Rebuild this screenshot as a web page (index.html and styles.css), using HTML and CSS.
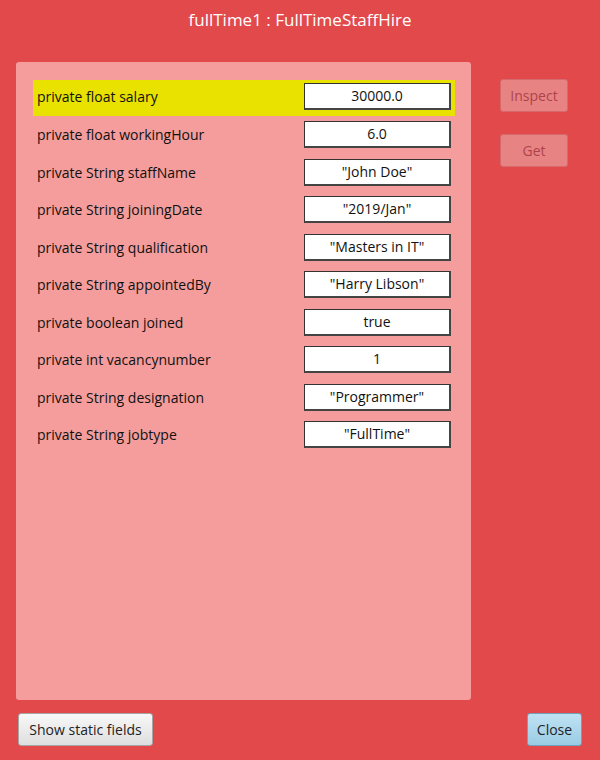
FILE: index.html
```html
<!DOCTYPE html>
<html>
<head>
<meta charset="utf-8">
<link rel="stylesheet" href="styles.css">
</head>
<body>
<div class="title">fullTime1 : FullTimeStaffHire</div>
<div class="main">
  <div class="panel">
    <div class="row sel"><span class="lbl">private float salary</span><span class="val">30000.0</span></div>
    <div class="row"><span class="lbl">private float workingHour</span><span class="val">6.0</span></div>
    <div class="row"><span class="lbl">private String staffName</span><span class="val">"John Doe"</span></div>
    <div class="row"><span class="lbl">private String joiningDate</span><span class="val">"2019/Jan"</span></div>
    <div class="row"><span class="lbl">private String qualification</span><span class="val">"Masters in IT"</span></div>
    <div class="row"><span class="lbl">private String appointedBy</span><span class="val">"Harry Libson"</span></div>
    <div class="row"><span class="lbl">private boolean joined</span><span class="val">true</span></div>
    <div class="row"><span class="lbl">private int vacancynumber</span><span class="val">1</span></div>
    <div class="row"><span class="lbl">private String designation</span><span class="val">"Programmer"</span></div>
    <div class="row"><span class="lbl">private String jobtype</span><span class="val">"FullTime"</span></div>
  </div>
  <div class="side">
    <button class="btn dis">Inspect</button>
    <button class="btn dis">Get</button>
  </div>
</div>
<div class="footer">
  <button class="btn plain">Show static fields</button>
  <button class="btn blue">Close</button>
</div>
</body>
</html>
```
FILE: styles.css
```css
html, body {
  margin: 0;
  padding: 0;
  background: #e2494b;
  width: 600px;
  height: 760px;
  overflow: hidden;
  font-family: "Open Sans", "Noto Sans", sans-serif;
}
.title {
  height: 40px;
  line-height: 40px;
  text-align: center;
  color: #fff;
  font-size: 17px;
  font-weight: 400;
}
.main {
  display: flex;
  margin-top: 22px;
  height: 638px;
}
.panel {
  margin-left: 16px;
  width: 455px;
  height: 638px;
  box-sizing: border-box;
  background: #f49d9c;
  border-radius: 3px;
  padding: 18px 16px 0 17px;
}
.row {
  height: 37.5px;
  display: flex;
  align-items: center;
  justify-content: space-between;
  padding: 0 4px;
}
.row.sel {
  background: #e9e100;
  height: 36px;
  box-sizing: border-box;
  padding-bottom: 3px;
}
.lbl {
  font-size: 14px;
  color: #111;
}
.val {
  width: 147px;
  height: 27px;
  box-sizing: border-box;
  background: #fff;
  border: 1px solid #333;
  border-right: 2px solid #444;
  border-bottom: 2px solid #444;
  text-align: center;
  font-size: 14px;
  line-height: 23px;
  color: #111;
}
.side {
  margin-left: 29px;
  display: flex;
  flex-direction: column;
  gap: 22px;
  padding-top: 17px;
}
.btn {
  font-family: "Open Sans", "Noto Sans", sans-serif;
  font-size: 14px;
  border-radius: 3px;
  padding: 0;
  height: 33px;
  cursor: default;
}
.btn.dis {
  width: 68px;
  background: #e88384;
  border: 1px solid #d6696c;
  color: #ad434b;
}
.footer {
  display: flex;
  justify-content: space-between;
  padding: 13px 18px 0 18px;
}
.btn.plain {
  width: 135px;
  background: linear-gradient(#f8f8f8, #dedede);
  border: 1px solid #a5a5a5;
  color: #222;
}
.btn.blue {
  width: 55px;
  background: linear-gradient(#bfe2f3, #9acce4);
  border: 1px solid #6fa3bd;
  color: #222;
}
```
